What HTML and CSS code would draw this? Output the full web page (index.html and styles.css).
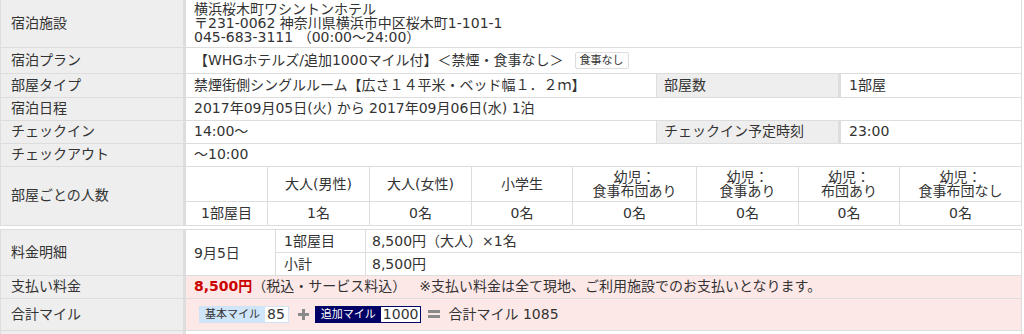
FILE: index.html
```html
<!DOCTYPE html>
<html lang="ja">
<head>
<meta charset="utf-8">
<title>予約内容</title>
<link rel="stylesheet" href="styles.css">
</head>
<body>
<table class="info">
  <colgroup>
    <col class="c-lbl"><col class="c-val"><col class="c-lbl2"><col class="c-val2">
  </colgroup>
  <tr>
    <th class="lbl">宿泊施設</th>
    <td class="val addr" colspan="3">横浜桜木町ワシントンホテル<br>〒231-0062 神奈川県横浜市中区桜木町1-101-1<br>045-683-3111 （00:00～24:00）</td>
  </tr>
  <tr class="plan">
    <th class="lbl">宿泊プラン</th>
    <td class="val" colspan="3">【WHGホテルズ/追加1000マイル付】＜禁煙・食事なし＞<span class="badge">食事なし</span></td>
  </tr>
  <tr class="room">
    <th class="lbl">部屋タイプ</th>
    <td class="val">禁煙街側シングルルーム【広さ１４平米・ベッド幅１．２ｍ】</td>
    <th class="lbl2">部屋数</th>
    <td class="val">1部屋</td>
  </tr>
  <tr>
    <th class="lbl">宿泊日程</th>
    <td class="val" colspan="3">2017年09月05日(火) から 2017年09月06日(水) 1泊</td>
  </tr>
  <tr>
    <th class="lbl">チェックイン</th>
    <td class="val">14:00～</td>
    <th class="lbl2">チェックイン予定時刻</th>
    <td class="val">23:00</td>
  </tr>
  <tr>
    <th class="lbl">チェックアウト</th>
    <td class="val" colspan="3">～10:00</td>
  </tr>
  <tr>
    <th class="lbl">部屋ごとの人数</th>
    <td class="nest" colspan="3">
      <table class="people">
        <colgroup>
          <col class="p0"><col class="p1"><col class="p2"><col class="p3"><col class="p4"><col class="p5"><col class="p6"><col class="p7">
        </colgroup>
        <tr class="head">
          <th></th>
          <th>大人(男性)</th>
          <th>大人(女性)</th>
          <th>小学生</th>
          <th>幼児：<br>食事布団あり</th>
          <th>幼児：<br>食事あり</th>
          <th>幼児：<br>布団あり</th>
          <th>幼児：<br>食事布団なし</th>
        </tr>
        <tr class="data">
          <td>1部屋目</td>
          <td>1名</td>
          <td>0名</td>
          <td>0名</td>
          <td>0名</td>
          <td>0名</td>
          <td>0名</td>
          <td>0名</td>
        </tr>
      </table>
    </td>
  </tr>
</table>

<table class="info second">
  <colgroup>
    <col class="c-lbl"><col class="c-rest">
  </colgroup>
  <tr>
    <th class="lbl">料金明細</th>
    <td class="nest">
      <table class="price">
        <colgroup>
          <col class="d0"><col class="d1"><col class="d2">
        </colgroup>
        <tr class="first">
          <td class="date" rowspan="2">9月5日</td>
          <td>1部屋目</td>
          <td>8,500円（大人）×1名</td>
        </tr>
        <tr>
          <td>小計</td>
          <td>8,500円</td>
        </tr>
      </table>
    </td>
  </tr>
  <tr class="pink">
    <th class="lbl">支払い料金</th>
    <td class="val"><strong class="amount">8,500円</strong>（税込・サービス料込）<span class="note">※支払い料金は全て現地、ご利用施設でのお支払いとなります。</span></td>
  </tr>
  <tr class="pink">
    <th class="lbl">合計マイル</th>
    <td class="val miles">
      <div class="mile-line">
        <span class="mbox basic"><span class="mlabel">基本マイル</span><span class="mval">85</span></span>
        <svg class="op plus" width="11" height="11" viewBox="0 0 11 11"><rect x="0" y="4" width="11" height="3" fill="#8a8a8a"/><rect x="4" y="0" width="3" height="11" fill="#8a8a8a"/></svg>
        <span class="mbox extra"><span class="mlabel">追加マイル</span><span class="mval">1000</span></span>
        <svg class="op eq" width="12" height="8" viewBox="0 0 12 8"><rect x="0" y="0" width="12" height="3" fill="#8a8a8a"/><rect x="0" y="5" width="12" height="3" fill="#8a8a8a"/></svg>
        <span class="total">合計マイル 1085</span>
      </div>
    </td>
  </tr>
  <tr>
    <th class="lbl tail"></th>
    <td class="val tail"></td>
  </tr>
</table>
</body>
</html>
```

FILE: styles.css
```css
body {
  margin: 0;
  background: #fff;
  color: #333;
  font-family: "DejaVu Sans", "Noto Sans CJK JP", sans-serif;
  font-size: 14px;
}

.info {
  width: 1022px;
  border-collapse: separate;
  border-spacing: 0;
  table-layout: fixed;
  border-left: 1px solid #ddd;
  border-right: 1px solid #ddd;
}

.info.second {
  margin-top: 3px;
  border-top: 1px solid #ddd;
}

.c-lbl { width: 185px; }
.c-val { width: 470px; }
.c-lbl2 { width: 185px; }
.c-val2 { width: 180px; }

.info > tbody > tr > th,
.info > tbody > tr > td {
  border-bottom: 1px solid #ddd;
  line-height: 15px;
  font-weight: normal;
  text-align: left;
  vertical-align: middle;
}

.lbl {
  background: #eee;
  border-right: 3px solid #ddd;
  padding: 3px 6px 4px 10px;
}

.lbl2 {
  background: #eee;
  border-left: 1px solid #ddd;
  border-right: 3px solid #ddd;
  padding: 3px 6px 4px 7px;
}

.val {
  padding: 3px 8px 4px 8px;
  white-space: nowrap;
}

.plan .val {
  padding: 4px 8px 4px 8px;
}

.room .val {
  padding: 4px 8px 4px 8px;
}

.addr {
  padding: 2px 8px 3px 8px;
  line-height: 14px !important;
}

.badge {
  display: inline-block;
  margin-left: 11px;
  padding: 0 4px;
  border: 1px solid #ddd;
  border-radius: 2px;
  background: #fdfdfd;
  font-size: 11px;
  line-height: 15px;
  vertical-align: middle;
  color: #333;
}

.nest {
  padding: 0;
}

.people,
.price {
  width: 100%;
  border-collapse: separate;
  border-spacing: 0;
  table-layout: fixed;
}

.p0 { width: 81px; }
.p1 { width: 102px; }
.p2 { width: 102px; }
.p3 { width: 101px; }
.p4 { width: 124px; }
.p5 { width: 102px; }
.p6 { width: 101px; }
.p7 { width: 122px; }

.people th,
.people td {
  text-align: center;
  font-weight: normal;
  vertical-align: middle;
  border-left: 1px solid #ddd;
  white-space: nowrap;
}

.people th:first-child,
.people td:first-child {
  border-left: 0;
}

.people .head th {
  border-bottom: 1px solid #ddd;
  line-height: 14px;
  padding: 3px 2px;
  height: 28px;
}

.people .data td {
  line-height: 15px;
  padding: 4px 2px 4px 2px;
}

.c-rest { width: 835px; }

.d0 { width: 89px; }
.d1 { width: 90px; }
.d2 { width: 656px; }

.price td {
  line-height: 15px;
  padding: 4px 8px 3px 8px;
  border-left: 1px solid #ddd;
  vertical-align: middle;
  white-space: nowrap;
}

.price td.date {
  border-left: 0;
}

.price tr.first td:not(.date) {
  border-bottom: 1px solid #ddd;
}

.price td:last-child {
  padding-left: 6px;
}

.pink > td {
  background: #fde8e8;
}

.amount {
  color: #cc0000;
  font-weight: bold;
}

.note {
  margin-left: 13px;
}

.miles {
  padding: 6px 8px 7px 13px;
}

.mile-line {
  display: flex;
  align-items: center;
  height: 18px;
}

.mbox {
  display: inline-flex;
  height: 17px;
  box-sizing: border-box;
  align-items: stretch;
}

.mlabel {
  display: flex;
  align-items: center;
  padding: 0 5px;
  font-size: 11px;
}

.mval {
  display: flex;
  align-items: center;
  background: #fff;
  padding: 0 3px 0 2px;
  font-size: 14px;
}

.basic {
  border: 1px solid #cfe3f5;
  background: #cfe5f9;
}

.basic .mlabel {
  color: #333;
}

.extra {
  border: 1px solid #000066;
  background: #000066;
}

.extra .mlabel {
  color: #fff;
}

.extra .mval {
  padding: 0 2px 0 2px;
}

.op {
  display: block;
}

.plus {
  margin: 0 6px 0 9px;
}

.eq {
  margin: 0 8px 0 7px;
}

.tail {
  height: 20px;
}
```
